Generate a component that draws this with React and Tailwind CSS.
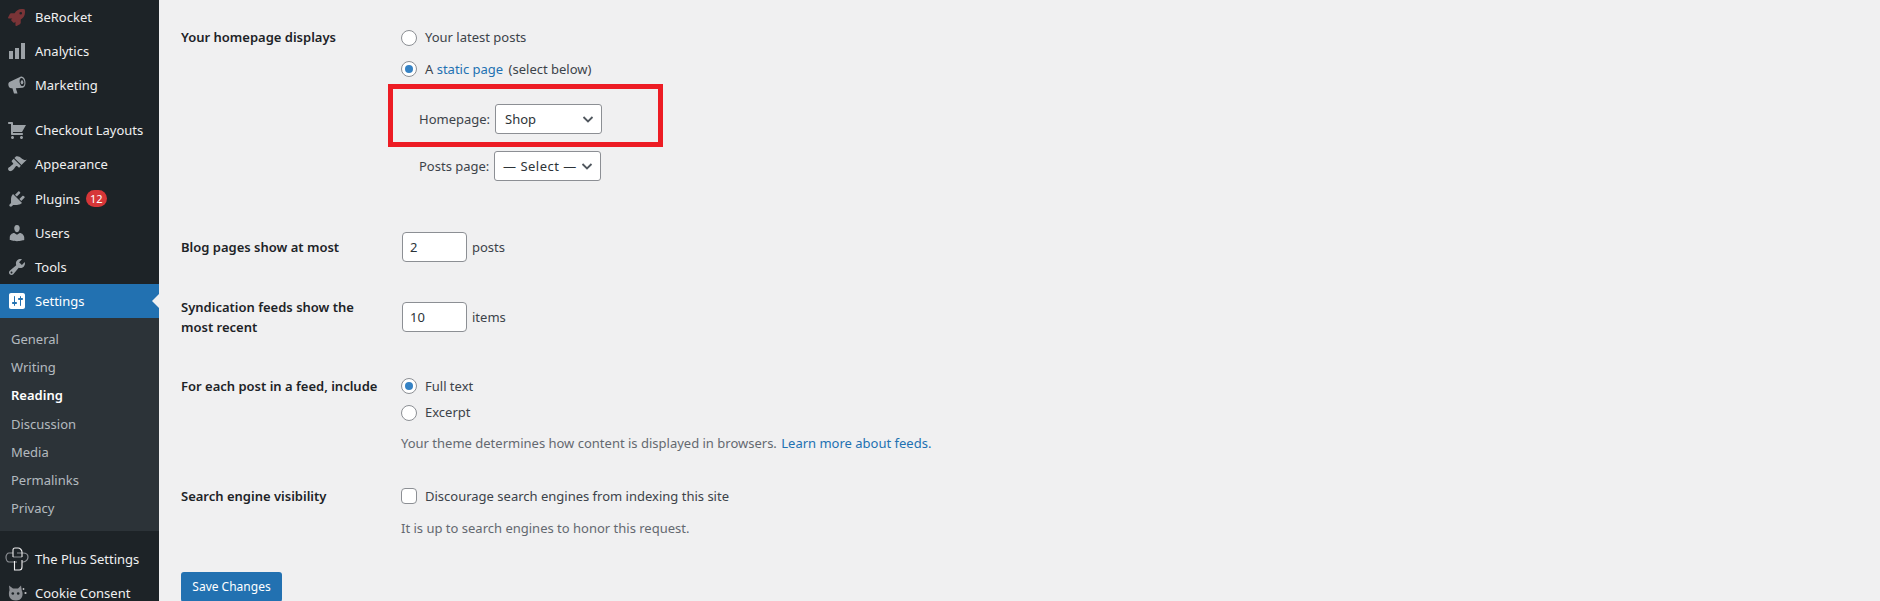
import { FaRocket } from "react-icons/fa";

// dashicons paths, 20x20 box
const paths = {
  bars: "M18 18V2h-4v16h4zm-6 0V7H8v11h4zm-6 0v-8H2v8h4z",
  cart: "M6 13h9c.55 0 1 .45 1 1s-.45 1-1 1H5c-.55 0-1-.45-1-1V4H2c-.55 0-1-.45-1-1s.45-1 1-1h3c.55 0 1 .45 1 1v2h13l-4 7H6v1zm-.5 3c.83 0 1.5.67 1.5 1.5S6.33 19 5.5 19 4 18.33 4 17.5 4.67 16 5.5 16zm9 0c.83 0 1.5.67 1.5 1.5s-.67 1.5-1.5 1.5-1.5-.67-1.5-1.5.67-1.5 1.5-1.5z",
  brush: "M14.48 11.06L7.41 3.99l1.5-1.5c.5-.56 2.3-.47 3.51.32 1.21.8 1.43 1.28 2.91 2.1 1.18.64 2.45 1.26 4.45.85zm-.71.71L6.7 4.7 4.93 6.47c-.39.39-.39 1.02 0 1.41l1.06 1.06c.39.39.39 1.03 0 1.42-.6.6-1.43 1.11-2.21 1.69-.35.26-.7.53-1.01.84C1.43 13.23.91 14.24 1.1 15.18c.17.93 1.05 1.76 1.97 1.93.94.19 1.95-.33 3.29-1.67.31-.31.58-.66.84-1.01.58-.78 1.09-1.61 1.69-2.21.39-.39 1.03-.39 1.42 0l1.06 1.06c.39.39 1.02.39 1.41 0z",
  plug: "M13.11 4.36L9.87 7.6 8 5.73l3.24-3.24c.35-.34 1.05-.2 1.56.32.52.51.66 1.21.31 1.55zm-8 1.77l.91-1.12 9.01 9.01-1.19.84c-.71.71-2.63 1.16-3.82 1.16H6.14L4.9 17.26c-.59.59-1.54.59-2.12 0-.59-.58-.59-1.53 0-2.12l1.24-1.24v-3.88c0-1.13.4-3.19 1.09-3.89zm7.26 3.97l3.24-3.24c.34-.35 1.04-.21 1.55.31.52.51.66 1.21.31 1.55l-3.24 3.25z",
  user: "M10 9.25c-2.27 0-2.73-3.44-2.73-3.44C7 4.02 7.82 2 9.97 2c2.16 0 2.98 2.02 2.71 3.81 0 0-.41 3.44-2.68 3.44zm0 2.57L12.72 10c2.39 0 4.52 2.33 4.52 4.53v2.49s-3.65 1.13-7.24 1.13c-3.65 0-7.24-1.13-7.24-1.13v-2.49c0-2.25 1.94-4.48 4.47-4.48z",
  wrench: "M16.68 9.77c-1.34 1.34-3.3 1.67-4.95.99l-5.41 6.52c-.99.99-2.59.99-3.58 0s-.99-2.59 0-3.57l6.52-5.42c-.68-1.65-.35-3.61.99-4.95 1.28-1.28 3.12-1.62 4.72-1.06l-2.89 2.89 2.82 2.82 2.86-2.87c.53 1.58.18 3.39-1.08 4.65zM3.81 16.21c.4.39 1.04.39 1.43 0 .4-.4.4-1.04 0-1.43-.39-.4-1.03-.4-1.43 0-.39.39-.39 1.03 0 1.43z",
  settings: "M18 16V4c0-1.1-.9-2-2-2H4c-1.1 0-2 .9-2 2v12c0 1.1.9 2 2 2h12c1.1 0 2-.9 2-2zM8 11h1c.55 0 1 .45 1 1s-.45 1-1 1H8v1.5c0 .28-.22.5-.5.5s-.5-.22-.5-.5V13H6c-.55 0-1-.45-1-1s.45-1 1-1h1V5.5c0-.28.22-.5.5-.5s.5.22.5.5V11zm5-2h-1c-.55 0-1-.45-1-1s.45-1 1-1h1V5.5c0-.28.22-.5.5-.5s.5.22.5.5V7h1c.55 0 1 .45 1 1s-.45 1-1 1h-1v5.5c0 .28-.22.5-.5.5s-.5-.22-.5-.5V9z",
};

function Dash({ d }) {
  return (
    <svg width="20" height="20" viewBox="0 0 20 20" fill="currentColor">
      <path d={d} />
    </svg>
  );
}

function Megaphone() {
  return (
    <svg width="20" height="20" viewBox="0 0 20 20" fill="currentColor">
      <path
        fillRule="evenodd"
        d="M14 1.600c2.200-.5 4 2 4.400 5 .4 3-.5 5.600-2.600 6.200l-7 .4 1.700 5.300H7l-1.600-5.200H4.200c-1.300 0-2.500-1.300-2.800-3-.3-1.700.3-3.200 1.500-3.600zM14.200 3c-1.400.4-1.900 2.200-1.500 4.400.4 2.200 1.600 3.900 3 3.700 1.400-.3 2-2.200 1.600-4.400C16.900 4.500 15.600 2.800 14.200 3z"
      />
      <ellipse cx="15" cy="7.200" rx="1.300" ry="2" />
    </svg>
  );
}

function PlusIcon() {
  return (
    <svg width="24" height="24" viewBox="0 0 24 24" fill="none">
      <path d="M1 10c0-2 1.500-4 3-4h4M12 6h6c3 0 5 1.500 5 4s-2 5-5 5h-1M1 10c0 3 1.500 5 3 5h8M8 10h9" stroke="#8c8f94" strokeWidth="1.200" />
      <path d="M8 10V3c0-1 1-2 2-2h3c2 0 4 2 4 4v5M17 13v7c0 1.500-1 3-2.500 3H9.500v-9" stroke="#f0f0f1" strokeWidth="1.100" />
    </svg>
  );
}

function CatIcon() {
  return (
    <svg width="20" height="20" viewBox="0 0 20 20" fill="#8c8f94">
      <path d="M1 2.500l4 3h5l3-3 .8 5c1 1.800 1 4.500.2 6.500-1 2.500-3.500 3.500-6 3.500-3 0-5.500-1-6.500-3.500-.8-2-.8-5 0-6.800z" />
      <circle cx="4.800" cy="10.500" r="1.300" fill="#1d2327" />
      <circle cx="10.200" cy="10.500" r="1.300" fill="#1d2327" />
      <circle cx="15.500" cy="6" r=".9" fill="#c3c4c7" />
      <circle cx="17.500" cy="10" r="1.100" fill="#c3c4c7" />
    </svg>
  );
}

const topItems = [
  { label: "BeRocket", icon: <FaRocket className="text-[#7a3437] text-[17px] ml-[1px]" /> },
  { label: "Analytics", icon: <Dash d={paths.bars} /> },
  { label: "Marketing", icon: <Megaphone /> },
];

const midItems = [
  { label: "Checkout Layouts", icon: <Dash d={paths.cart} /> },
  { label: "Appearance", icon: <Dash d={paths.brush} /> },
  { label: "Plugins", icon: <Dash d={paths.plug} />, badge: "12" },
  { label: "Users", icon: <Dash d={paths.user} /> },
  { label: "Tools", icon: <Dash d={paths.wrench} /> },
];

const subItems = ["General", "Writing", "Reading", "Discussion", "Media", "Permalinks", "Privacy"];

function MenuRow({ item }) {
  return (
    <div className="flex items-center h-[34.2px] text-[#f0f0f1]">
      <div className="w-[35px] pl-[7px] text-[#9ca2a7]">{item.icon}</div>
      <span>{item.label}</span>
      {item.badge && (
        <span className="ml-[6px] w-[21px] h-[17px] rounded-full bg-[#d63638] text-white text-[11px] leading-[17px] text-center">
          {item.badge}
        </span>
      )}
    </div>
  );
}

function Sidebar() {
  return (
    <aside className="w-[159px] shrink-0 bg-[#1d2327] h-full overflow-hidden">
      {topItems.map((item) => (
        <MenuRow key={item.label} item={item} />
      ))}
      <div className="h-[10.6px]" />
      {midItems.map((item) => (
        <MenuRow key={item.label} item={item} />
      ))}
      <div className="relative flex items-center h-[34px] bg-[#2271b1] text-white">
        <div className="w-[35px] pl-[7px] text-white">
          <Dash d={paths.settings} />
        </div>
        <span>Settings</span>
        <div className="absolute right-0 top-[10px] border-y-[7px] border-r-[7px] border-y-transparent border-r-[#f0f0f1]" />
      </div>
      <div className="bg-[#2c3338] h-[213px] pt-[7px] pl-[11px]">
        {subItems.map((s) => (
          <div
            key={s}
            className={
              s === "Reading"
                ? "h-[28.2px] leading-[28px] font-semibold text-white"
                : "h-[28.2px] leading-[28px] text-[#f0f6fcb3]"
            }
          >
            {s}
          </div>
        ))}
      </div>
      <div className="h-[11px]" />
      <div className="flex items-center h-[34px] text-[#f0f0f1]">
        <div className="w-[35px] pl-[5px]">
          <PlusIcon />
        </div>
        <span>The Plus Settings</span>
      </div>
      <div className="flex items-center h-[34px] text-[#f0f0f1]">
        <div className="w-[35px] pl-[8px]">
          <CatIcon />
        </div>
        <span>Cookie Consent</span>
      </div>
    </aside>
  );
}

function Radio({ checked }) {
  return (
    <span className="w-[16px] h-[16px] rounded-full border border-[#8c8f94] bg-white flex items-center justify-center shrink-0">
      {checked && <span className="w-[8px] h-[8px] rounded-full bg-[#3582c4]" />}
    </span>
  );
}

function Chevron() {
  return (
    <svg width="12" height="12" viewBox="0 0 12 12" fill="none" stroke="#50575e" strokeWidth="1.8">
      <path d="M1.500 4l4.500 4.500L10.500 4" />
    </svg>
  );
}

function Select({ children, pad }) {
  return (
    <div className={`w-[107px] h-[30px] flex items-center justify-between border border-[#8c8f94] rounded-[3px] bg-white pr-[7px] text-[#2c3338] ${pad}`}>
      {children}
      <Chevron />
    </div>
  );
}

function NumberBox({ value }) {
  return (
    <div className="w-[65px] h-[30px] flex items-center border border-[#8c8f94] rounded-[4px] bg-white pl-[7px] text-[#2c3338]">
      {value}
    </div>
  );
}

function Label({ children }) {
  return <div className="w-[220px] shrink-0 font-semibold text-[#1d2327] leading-[20px]">{children}</div>;
}

export default function App() {
  return (
    <div className="flex w-[1880px] h-[601px] overflow-hidden bg-[#f0f0f1] text-[13px] leading-[20px] text-[#3c434a] font-['Noto_Sans',sans-serif]">
      <Sidebar />
      <main className="relative flex-1 pl-[22px] pt-[28px]">
        <section className="flex">
          <div className="-mt-[1px]">
            <Label>Your homepage displays</Label>
          </div>
          <div>
            <div className="flex items-center gap-[8px] h-[20px]">
              <Radio />
              <span className="-mt-[2px]">Your latest posts</span>
            </div>
            <div className="flex items-center gap-[8px] h-[20px] mt-[11px]">
              <Radio checked />
              <span>
                A <span className="text-[#2271b1]">static page</span>{" "}
                <span className="ml-[2px]">(select below)</span>
              </span>
            </div>
            <div className="flex items-center mt-[25px] ml-[18px]">
              <span className="w-[76px]">Homepage:</span>
              <Select pad="pl-[9px]">
                <span>Shop</span>
              </Select>
            </div>
            <div className="flex items-center mt-[17px] ml-[18px]">
              <span className="w-[75px]">Posts page:</span>
              <Select pad="pl-[8px]">
                <span className="tracking-[0.5px]">— Select —</span>
              </Select>
            </div>
          </div>
        </section>

        <section className="flex mt-[51px]">
          <div className="pt-[5px]">
            <Label>Blog pages show at most</Label>
          </div>
          <div className="flex items-center gap-[5px] ml-[1px]">
            <NumberBox value="2" />
            <span>posts</span>
          </div>
        </section>

        <section className="flex mt-[35px]">
          <Label>
            Syndication feeds show the
            <br />
            most recent
          </Label>
          <div className="flex items-center gap-[5px] ml-[1px] mt-[5px] h-[30px]">
            <NumberBox value="10" />
            <span>items</span>
          </div>
        </section>

        <section className="flex mt-[39px]">
          <Label>For each post in a feed, include</Label>
          <div>
            <div className="flex items-center gap-[8px] h-[20px]">
              <Radio checked />
              <span>Full text</span>
            </div>
            <div className="flex items-center gap-[8px] h-[20px] mt-[7px]">
              <Radio />
              <span className="-mt-[2px]">Excerpt</span>
            </div>
            <p className="mt-[10px] text-[#646970]">
              Your theme determines how content is displayed in browsers.{" "}
              <span className="text-[#2271b1] ml-[1px]">Learn more about feeds.</span>
            </p>
          </div>
        </section>

        <section className="flex mt-[33px]">
          <Label>Search engine visibility</Label>
          <div>
            <div className="flex items-center gap-[8px] h-[20px]">
              <span className="w-[16px] h-[16px] rounded-[4px] border border-[#8c8f94] bg-white shrink-0" />
              <span>Discourage search engines from indexing this site</span>
            </div>
            <p className="mt-[12px] text-[#646970]">It is up to search engines to honor this request.</p>
          </div>
        </section>

        <button className="block mt-[34px] w-[101px] h-[30px] rounded-[3px] bg-[#2271b1] text-white text-[12px]">Save Changes</button>

        <div className="absolute left-[229px] top-[84px] w-[275px] h-[63px] border-[5px] border-[#ed1c24]" />
      </main>
    </div>
  );
}
